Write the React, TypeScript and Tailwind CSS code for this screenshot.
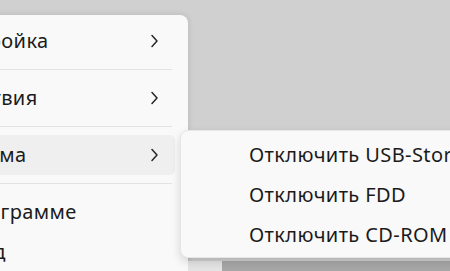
import React from "react";

const font = { fontFamily: '"Noto Sans", "Open Sans", sans-serif' };

function Chevron() {
  return (
    <svg width="9" height="14" viewBox="0 0 9 14" fill="none" className="shrink-0">
      <path d="M2 1.5l5 5.5-5 5.5" stroke="#262626" strokeWidth="1.5" strokeLinecap="round" strokeLinejoin="round" />
    </svg>
  );
}

function Separator() {
  return <div className="my-2 mr-4 ml-4 h-px bg-[#e3e3e3]" />;
}

function MainItem({ label, sub, active }: { label: string; sub?: boolean; active?: boolean }) {
  return (
    <div
      className={`mx-1 mr-[13px] flex h-10 items-center justify-between rounded-[5px] pl-[50px] pr-[16px] ${
        active ? "bg-[#efefef]" : ""
      }`}
    >
      <span className="text-[20px] tracking-[0.4px] text-[#1b1b1b]">{label}</span>
      {sub && <Chevron />}
    </div>
  );
}

function SubItem({ label }: { label: string }) {
  return (
    <div className="mx-1 flex h-10 items-center pl-[64px] text-[20px] tracking-[0.4px] text-[#1b1b1b] whitespace-nowrap">
      {label}
    </div>
  );
}

export default function App() {
  return (
    <div className="flex h-[271px] w-[450px] overflow-hidden bg-[#d0d0d0]" style={font}>
      {/* main context menu, its left part is off screen */}
      <div className="-ml-[112px] mt-[15px] w-[300px] shrink-0 rounded-tr-lg bg-[#f9f9f9] pt-[6px] shadow-[0_0_6px_rgba(0,0,0,0.12)]">
        <MainItem label="Настройка" sub />
        <Separator />
        <MainItem label="Действия" sub />
        <Separator />
        <MainItem label="Система" sub active />
        <Separator />
        <MainItem label="О программе" />
        <MainItem label="Выход" />
      </div>

      <div className="flex min-w-0 flex-1 flex-col">
        {/* submenu */}
        <div className="relative z-10 -ml-2 mt-[130px] h-[128px] w-[320px] shrink-0 rounded-lg border border-[#e6e6e6] bg-[#f9f9f9] pt-[4px] shadow-[0_4px_10px_rgba(0,0,0,0.14)]">
          <SubItem label="Отключить USB-Storage" />
          <SubItem label="Отключить FDD" />
          <SubItem label="Отключить CD-ROM" />
        </div>
        <div className="mt-[3px] flex flex-1">
          <div className="w-[34px] bg-[#e4e4e4]" />
          <div className="flex-1 bg-[#a7a7a7]" />
        </div>
      </div>
    </div>
  );
}
